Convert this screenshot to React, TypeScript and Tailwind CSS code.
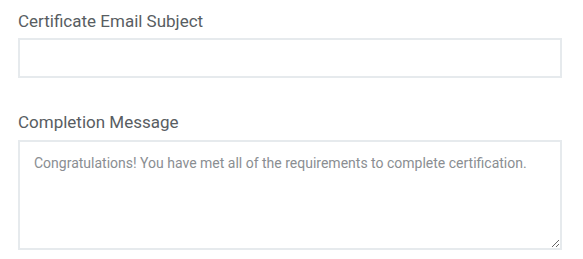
export default function App() {
  return (
    <div className="w-[583px] h-[259px] bg-white pl-[18px] pr-[21px] pt-[9px]" style={{ fontFamily: 'Roboto, "Liberation Sans", sans-serif' }}>
      <label className="block text-[17px] leading-[24px] text-[#585d62] mb-[5px]">Certificate Email Subject</label>
      <input type="text" className="block w-full h-[40px] border-2 border-[#e6eaed] bg-white outline-none px-[14px] text-[14px]" />
      <label className="block text-[17px] leading-[24px] text-[#585d62] mt-[32px] mb-[6px]">Completion Message</label>
      <textarea
        className="block w-full h-[110px] border-2 border-[#e6eaed] bg-white outline-none px-[14px] pt-[11px] text-[14px] leading-[20px] text-[#5f6368] placeholder:text-[#8a8e92] resize-y"
        placeholder="Congratulations! You have met all of the requirements to complete certification."
      />
    </div>
  );
}
